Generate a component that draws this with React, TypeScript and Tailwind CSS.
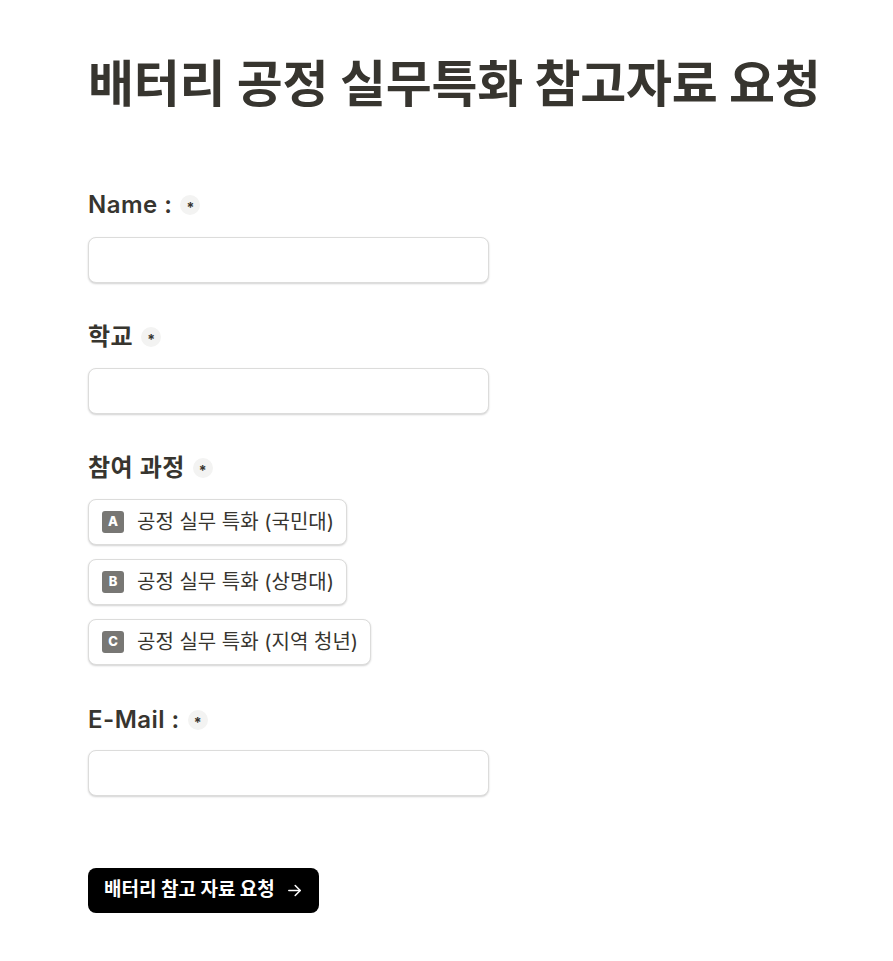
import React from "react";

const font = "font-['Inter','Noto_Sans_CJK_KR',sans-serif]";

function Req() {
  return (
    <span className="ml-[8px] inline-flex h-[20px] w-[20px] items-center justify-center rounded-full bg-[#f3f3f2] text-[14px] font-bold leading-none tracking-normal text-[#37352f]">
      <span className="mt-[5px]">*</span>
    </span>
  );
}

function Label({ children }: { children: React.ReactNode }) {
  return (
    <div className="flex h-[28px] items-center text-[24px] font-semibold tracking-[0.02em] text-[#37352f]">
      <span>{children}</span>
      <Req />
    </div>
  );
}

function Input() {
  return (
    <div className="h-[46px] w-[401px] rounded-[8px] border border-[#dcdcdb] bg-white shadow-[0_1px_2px_rgba(0,0,0,0.18)]" />
  );
}

function Option({ letter, text }: { letter: string; text: string }) {
  return (
    <div className="flex h-[46px] w-fit items-center rounded-[8px] border border-[#dcdcdb] bg-white pl-[13px] pr-[12px] shadow-[0_1px_2px_rgba(0,0,0,0.18)]">
      <span className="flex h-[22px] w-[22px] items-center justify-center rounded-[3px] bg-[#787774] text-[13px] font-extrabold text-white">
        {letter}
      </span>
      <span className="ml-[13px] text-[20px] text-[#37352f]">{text}</span>
    </div>
  );
}

export default function App() {
  return (
    <div className={`${font} min-h-[961px] bg-white pl-[88px] pt-[49px]`}>
      <h1 className="text-[50px] font-bold leading-[70px] tracking-[-0.005em] text-[#37352f]">
        배터리 공정 실무특화 참고자료 요청
      </h1>
      <div className="mt-[72px] flex flex-col">
        <Label>Name :</Label>
        <div className="mt-[18px]">
          <Input />
        </div>
        <div className="mt-[40px]">
          <Label>학교</Label>
        </div>
        <div className="mt-[17px]">
          <Input />
        </div>
        <div className="mt-[40px]">
          <Label>참여 과정</Label>
        </div>
        <div className="mt-[17px] flex flex-col gap-[14px]">
          <Option letter="A" text="공정 실무 특화 (국민대)" />
          <Option letter="B" text="공정 실무 특화 (상명대)" />
          <Option letter="C" text="공정 실무 특화 (지역 청년)" />
        </div>
        <div className="mt-[41px]">
          <Label>E-Mail :</Label>
        </div>
        <div className="mt-[16px]">
          <Input />
        </div>
        <div className="mt-[72px]">
          <button className="flex h-[45px] items-center rounded-[8px] bg-black pl-[16px] pr-[16px] text-[19px] font-bold text-white">
            <span>배터리 참고 자료 요청</span>
            <svg className="ml-[11px]" width="17" height="17" viewBox="0 0 24 24" fill="none" stroke="currentColor" strokeWidth="2.2" strokeLinecap="round" strokeLinejoin="round">
              <path d="M4 12h16" />
              <path d="M13 5l7 7-7 7" />
            </svg>
          </button>
        </div>
      </div>
    </div>
  );
}
